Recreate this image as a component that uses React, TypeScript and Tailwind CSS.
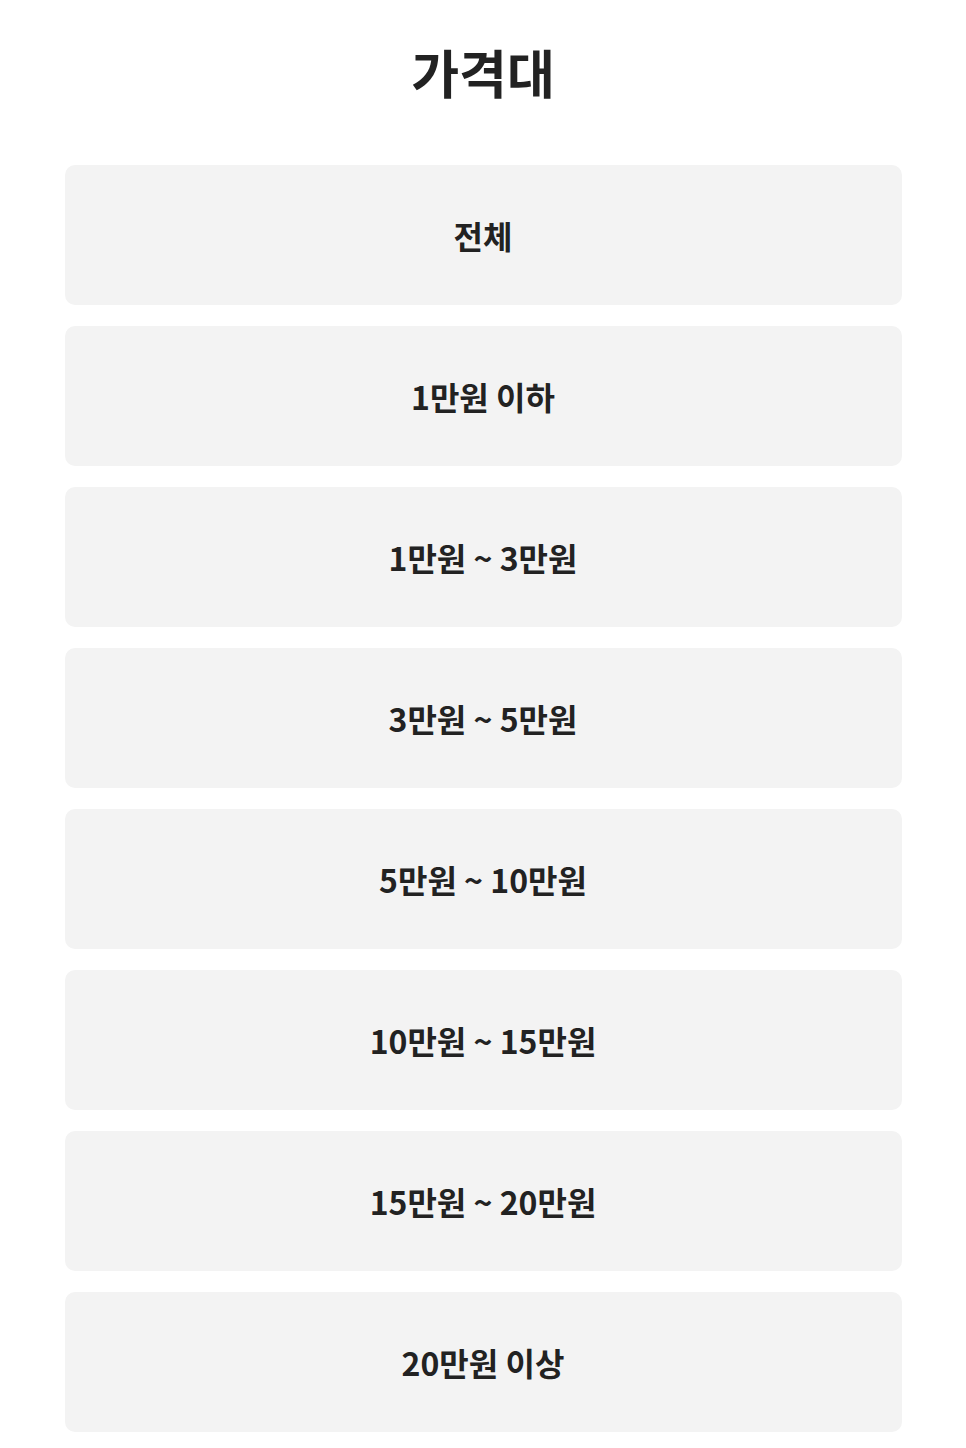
const ranges = [
  "전체",
  "1만원 이하",
  "1만원 ~ 3만원",
  "3만원 ~ 5만원",
  "5만원 ~ 10만원",
  "10만원 ~ 15만원",
  "15만원 ~ 20만원",
  "20만원 이상",
];

const App = () => {
  return (
    <div className="min-h-screen bg-white font-['Noto_Sans_CJK_KR',sans-serif] text-[#222]">
      <h1 className="pt-[38px] text-center text-[52px] font-bold leading-[68px]">가격대</h1>
      <div className="mx-auto mt-[59px] flex w-[837px] flex-col gap-[21px]">
        {ranges.map((r) => (
          <button
            key={r}
            className="flex h-[140px] items-center justify-center rounded-[10px] bg-[#f3f3f3] text-[32px] font-bold"
          >
            {r}
          </button>
        ))}
      </div>
    </div>
  );
};

export default App;
